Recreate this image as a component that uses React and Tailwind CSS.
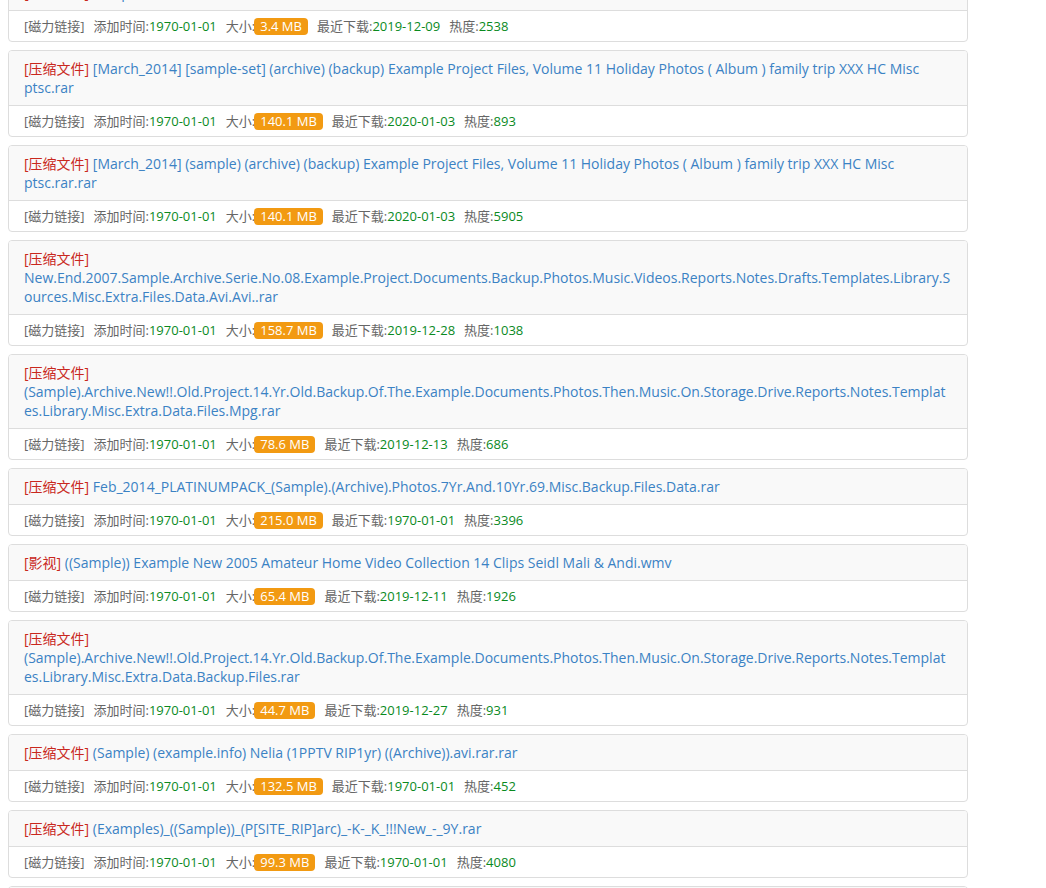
// Layout of the result list. The original titles are replaced with neutral placeholder text.
const items = [
  { cat: "压缩文件", title: "Sample_Archive_Part_00.rar", size: "3.4 MB", last: "2019-12-09", hot: "2538" },
  {
    cat: "压缩文件",
    title:
      "[March_2014] [sample-set] (archive) (backup) Example Project Files, Volume 11 Holiday Photos ( Album ) family trip XXX HC Misc ptsc.rar",
    size: "140.1 MB",
    last: "2020-01-03",
    hot: "893",
  },
  {
    cat: "压缩文件",
    title:
      "[March_2014] (sample) (archive) (backup) Example Project Files, Volume 11 Holiday Photos ( Album ) family trip XXX HC Misc ptsc.rar.rar",
    size: "140.1 MB",
    last: "2020-01-03",
    hot: "5905",
  },
  {
    cat: "压缩文件",
    title:
      "New.End.2007.Sample.Archive.Serie.No.08.Example.Project.Documents.Backup.Photos.Music.Videos.Reports.Notes.Drafts.Templates.Library.Sources.Misc.Extra.Files.Data.Avi.Avi..rar",
    size: "158.7 MB",
    last: "2019-12-28",
    hot: "1038",
  },
  {
    cat: "压缩文件",
    title:
      "(Sample).Archive.New!!.Old.Project.14.Yr.Old.Backup.Of.The.Example.Documents.Photos.Then.Music.On.Storage.Drive.Reports.Notes.Templates.Library.Misc.Extra.Data.Files.Mpg.rar",
    size: "78.6 MB",
    last: "2019-12-13",
    hot: "686",
  },
  {
    cat: "压缩文件",
    title: "Feb_2014_PLATINUMPACK_(Sample).(Archive).Photos.7Yr.And.10Yr.69.Misc.Backup.Files.Data.rar",
    size: "215.0 MB",
    last: "1970-01-01",
    hot: "3396",
  },
  {
    cat: "影视",
    title: "((Sample)) Example New 2005 Amateur Home Video Collection 14 Clips Seidl Mali & Andi.wmv",
    size: "65.4 MB",
    last: "2019-12-11",
    hot: "1926",
  },
  {
    cat: "压缩文件",
    title:
      "(Sample).Archive.New!!.Old.Project.14.Yr.Old.Backup.Of.The.Example.Documents.Photos.Then.Music.On.Storage.Drive.Reports.Notes.Templates.Library.Misc.Extra.Data.Backup.Files.rar",
    size: "44.7 MB",
    last: "2019-12-27",
    hot: "931",
  },
  {
    cat: "压缩文件",
    title: "(Sample) (example.info) Nelia (1PPTV RIP1yr) ((Archive)).avi.rar.rar",
    size: "132.5 MB",
    last: "1970-01-01",
    hot: "452",
  },
  {
    cat: "压缩文件",
    title: "(Examples)_((Sample))_(P[SITE_RIP]arc)_-K-_K_!!!New_-_9Y.rar",
    size: "99.3 MB",
    last: "1970-01-01",
    hot: "4080",
  },
  { cat: "压缩文件", title: "Sample_Archive_Part_11.rar", size: "12.0 MB", last: "1970-01-01", hot: "100" },
];

function Row({ item }) {
  return (
    <div className="mb-2 w-[960px] overflow-hidden rounded border border-[#ddd] bg-white">
      <div className="break-words bg-[#f9f9f9] px-[15px] py-[8px] text-[14px] leading-[19px]">
        <span className="text-[#c9281e]">[{item.cat}]</span>{" "}
        <span className="text-[#3b82c4]">{item.title}</span>
      </div>
      <div className="flex h-[31px] items-center gap-[9px] border-t border-[#ddd] px-[15px] pt-[1px] text-[13px] text-[#666]">
        <span>[磁力链接]</span>
        <span>
          添加时间:<span className="text-[#0a8a1e]">1970-01-01</span>
        </span>
        <span className="flex items-center">
          大小:
          <span className="-ml-[1px] rounded-[4px] bg-[#f29a12] px-[6px] leading-[17px] text-white">
            {item.size}
          </span>
        </span>
        <span>
          最近下载:<span className="text-[#0a8a1e]">{item.last}</span>
        </span>
        <span>
          热度:<span className="text-[#0a8a1e]">{item.hot}</span>
        </span>
      </div>
    </div>
  );
}

export default function App() {
  return (
    <div
      className="h-[888px] overflow-hidden bg-white px-2"
      style={{ fontFamily: '"Open Sans", "Noto Sans CJK SC", sans-serif' }}
    >
      <div className="-mt-[26px]">
        {items.map((item, i) => (
          <Row key={i} item={item} />
        ))}
      </div>
    </div>
  );
}
